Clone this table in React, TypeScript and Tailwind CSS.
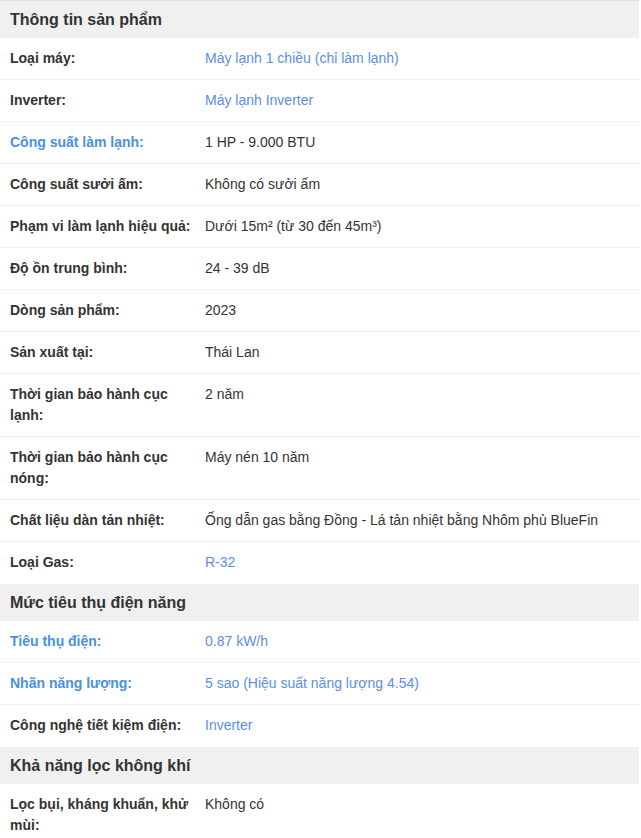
type Row = { label: string; value: string; labelLink?: boolean; valueLink?: boolean };
type Section = { title: string; rows: Row[] };

const sections: Section[] = [
  {
    title: "Thông tin sản phẩm",
    rows: [
      { label: "Loại máy:", value: "Máy lạnh 1 chiều (chỉ làm lạnh)", valueLink: true },
      { label: "Inverter:", value: "Máy lạnh Inverter", valueLink: true },
      { label: "Công suất làm lạnh:", value: "1 HP - 9.000 BTU", labelLink: true },
      { label: "Công suất sưởi ấm:", value: "Không có sưởi ấm" },
      { label: "Phạm vi làm lạnh hiệu quả:", value: "Dưới 15m² (từ 30 đến 45m³)" },
      { label: "Độ ồn trung bình:", value: "24 - 39 dB" },
      { label: "Dòng sản phẩm:", value: "2023" },
      { label: "Sản xuất tại:", value: "Thái Lan" },
      { label: "Thời gian bảo hành cục lạnh:", value: "2 năm" },
      { label: "Thời gian bảo hành cục nóng:", value: "Máy nén 10 năm" },
      { label: "Chất liệu dàn tản nhiệt:", value: "Ống dẫn gas bằng Đồng - Lá tản nhiệt bằng Nhôm phủ BlueFin" },
      { label: "Loại Gas:", value: "R-32", valueLink: true },
    ],
  },
  {
    title: "Mức tiêu thụ điện năng",
    rows: [
      { label: "Tiêu thụ điện:", value: "0.87 kW/h", labelLink: true, valueLink: true },
      { label: "Nhãn năng lượng:", value: "5 sao (Hiệu suất năng lượng 4.54)", labelLink: true, valueLink: true },
      { label: "Công nghệ tiết kiệm điện:", value: "Inverter", valueLink: true },
    ],
  },
  {
    title: "Khả năng lọc không khí",
    rows: [{ label: "Lọc bụi, kháng khuẩn, khử mùi:", value: "Không có" }],
  },
];

export default function App() {
  return (
    <div className="w-[639px] border-t border-[#e0e0e0] bg-white text-[14px] leading-[21px] text-[#333] [font-family:'Liberation_Sans',Arial,sans-serif]">
      {sections.map((s) => (
        <div key={s.title}>
          <div className="flex h-[37px] items-center bg-[#f0f0f0] px-[10px] text-[16px] font-bold text-[#333]">{s.title}</div>
          {s.rows.map((r, i) => (
            <div
              key={r.label}
              className={`flex py-[10px] ${i < s.rows.length - 1 ? "border-b border-[#eeeeee]" : "pb-[11px]"}`}
            >
              <div className={`w-[205px] flex-none pl-[10px] pr-[10px] font-bold ${r.labelLink ? "text-[#4a90e2]" : "text-[#333]"}`}>
                {r.label}
              </div>
              <div className={`flex-1 pr-[10px] ${r.valueLink ? "text-[#5b8ee6]" : "text-[#333]"}`}>{r.value}</div>
            </div>
          ))}
        </div>
      ))}
    </div>
  );
}
